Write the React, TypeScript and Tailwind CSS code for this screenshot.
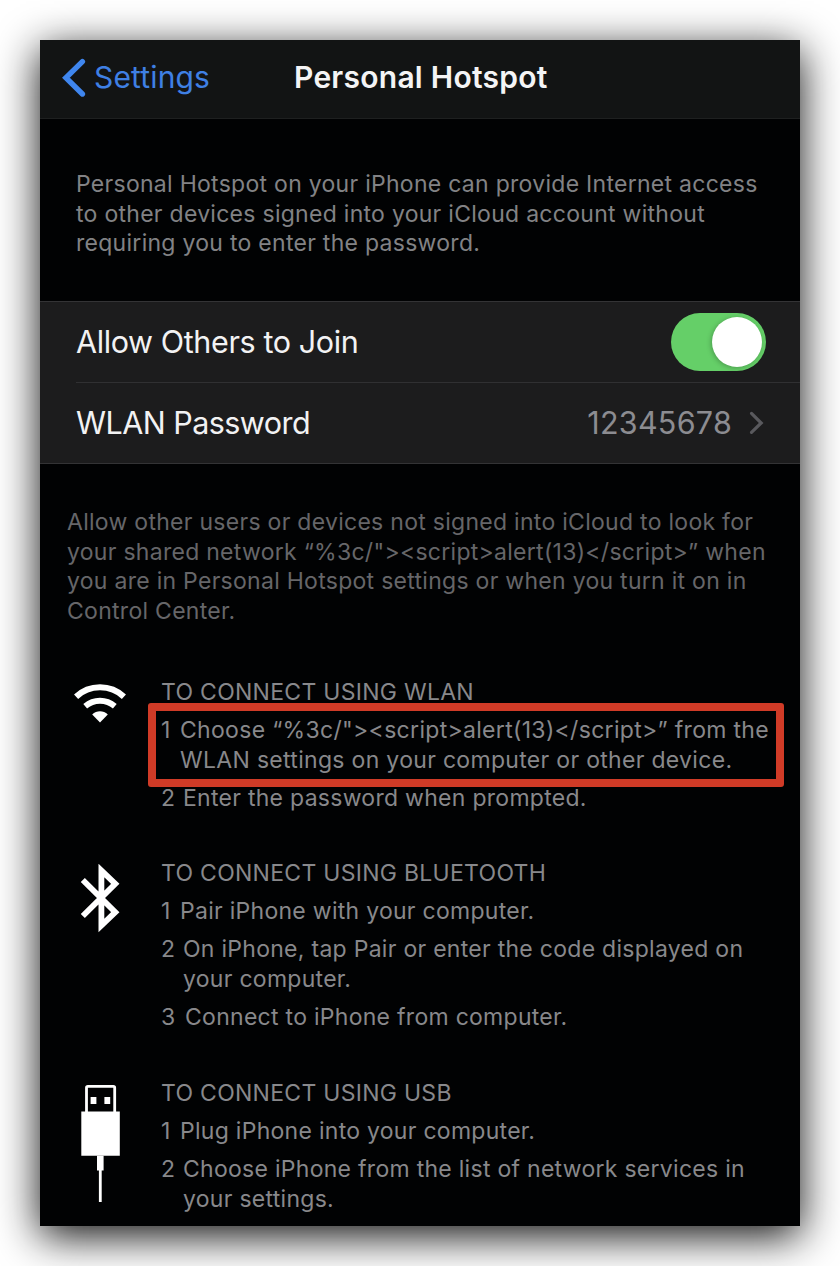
import type { ReactNode } from "react";

function WifiIcon() {
  return (
    <svg className="block h-[40px] w-[52px]" viewBox="0 0 52 40" fill="none">
      <path d="M2.1 12.7C15.4 0.1 36.6 0.1 49.9 12.7" stroke="#fff" strokeWidth="6" />
      <path d="M11.2 22.3C19.8 14.9 32.2 14.9 40.8 22.3" stroke="#fff" strokeWidth="5.8" />
      <path d="M18.2 30.6C22.6 26.2 29.4 26.2 33.8 30.6L26 38.6Z" fill="#fff" />
    </svg>
  );
}

function BluetoothIcon() {
  return (
    <svg className="block h-[70px] w-[40px]" viewBox="0 0 40 70" fill="none">
      <path
        d="M2.8 16L35.3 48.2L21.4 61.5V6.5L35.3 19.8L2.8 52"
        stroke="#fff"
        strokeWidth="5.8"
        strokeMiterlimit="10"
      />
    </svg>
  );
}

function UsbIcon() {
  return (
    <svg className="block h-[118px] w-[40px]" viewBox="0 0 40 118" fill="none">
      <path d="M5.5 28V2.8Q5.5 1.4 6.9 1.4H32.3Q33.7 1.4 33.7 2.8V28" stroke="#fff" strokeWidth="2.8" />
      <path d="M9.6 12h5.8v7H9.6zM23.4 12h5.8v7h-5.8z" fill="#fff" />
      <path d="M.3 26.4h38.5v44.4H.3z" fill="#fff" />
      <path d="M16 70.8h6.6v14.6H16zM17.9 85.4h2.8V117h-2.8z" fill="#fff" />
    </svg>
  );
}

function Step({ n, indent, children }: { n: number; indent: string; children: ReactNode }) {
  return (
    <li className="flex">
      <span className={`${indent} shrink-0`}>{n}</span>
      <span>{children}</span>
    </li>
  );
}

function Method({
  icon,
  title,
  className,
  children,
}: {
  icon: ReactNode;
  title: string;
  className: string;
  children: ReactNode;
}) {
  return (
    <section className={`flex text-[#88888b] ${className}`}>
      <div className="w-[87px] shrink-0">{icon}</div>
      <div className="whitespace-nowrap pt-px">
        <h2>{title}</h2>
        <ol className="mt-[8.5px] flex flex-col gap-[8.5px]">{children}</ol>
      </div>
    </section>
  );
}

export default function App() {
  return (
    <div className="h-[1266px] w-[840px] overflow-hidden bg-white p-[40px]">
      <main className="h-[1186px] w-[760px] bg-[#010203] font-['Inter','Liberation_Sans',sans-serif] text-[23px] leading-[29.5px] tracking-[0.28px] shadow-[0_10px_40px_rgba(0,0,0,0.95)]">
        <header className="flex h-[79px] items-center border-b border-[#1e2020] bg-[#121414] pb-[3px] pl-[22px]">
          <svg className="block h-[40px] w-[24px]" viewBox="0 0 24 40" fill="none">
            <path d="M20.4 3.6L3.9 19.8L20.4 36" stroke="#3f86ee" strokeWidth="5.4" strokeLinecap="round" />
          </svg>
          <span className="ml-[8px] w-[200px] text-[30px] tracking-[0.15px] text-[#3f80e4]">Settings</span>
          <h1 className="whitespace-nowrap text-[30px] font-semibold tracking-[0.25px] text-[#f4f4f5]">
            Personal Hotspot
          </h1>
        </header>

        <p className="h-[182px] whitespace-nowrap pl-[36px] pt-[51px] text-[#828285]">
          Personal Hotspot on your iPhone can provide Internet access
          <br />
          to other devices signed into your iCloud account without
          <br />
          requiring you to enter the password.
        </p>

        <div className="h-[163px] border-y border-[#333335] bg-[#1c1c1d] pl-[36px]">
          <div className="flex h-[81px] items-center justify-between border-b border-[#303032] pr-[34px]">
            <span className="text-[30.5px] tracking-[-0.38px] text-[#f2f2f3]">Allow Others to Join</span>
            <span className="flex h-[58px] w-[95px] items-center justify-end rounded-full bg-[#65cf68] pr-[4px]">
              <span className="size-[50px] rounded-full bg-white shadow-[-1px_1px_5px_rgba(0,0,0,0.25)]" />
            </span>
          </div>
          <div className="flex h-[81px] items-center pb-px pr-[36px]">
            <span className="text-[30.5px] tracking-[-0.54px] text-[#f2f2f3]">WLAN Password</span>
            <span className="ml-auto text-[30.5px] tracking-[0.25px] text-[#8c8c91]">12345678</span>
            <svg className="ml-[17px] block h-[24px] w-[15px]" viewBox="0 0 15 24" fill="none">
              <path d="M2.5 2.4L12.2 12L2.5 21.4" stroke="#59595d" strokeWidth="3.2" strokeLinecap="round" />
            </svg>
          </div>
        </div>

        <p className="h-[213px] whitespace-nowrap pl-[27px] pt-[44px] text-[#666669]">
          Allow other users or devices not signed into iCloud to look for
          <br />
          your shared network “%3c/"&gt;&lt;script&gt;alert(13)&lt;/script&gt;” when
          <br />
          you are in Personal Hotspot settings or when you turn it on in
          <br />
          Control Center.
        </p>

        <div className="pl-[34px]">
          <Method
            title="TO CONNECT USING WLAN"
            className="h-[181px]"
            icon={
              <div className="pt-[7px]">
                <WifiIcon />
              </div>
            }
          >
            <li className="relative flex">
              <span className="w-[19px] shrink-0">1</span>
              <span className="tracking-[0.31px]">
                Choose “%3c/"&gt;&lt;script&gt;alert(13)&lt;/script&gt;” from the
                <br />
                WLAN settings on your computer or other device.
              </span>
              <span className="absolute -left-[13px] -top-[13px] h-[84px] w-[636px] rounded-[3px] border-8 border-[#d03b27]" />
            </li>
            <Step n={2} indent="w-[22px]">
              Enter the password when prompted.
            </Step>
          </Method>

          <Method
            title="TO CONNECT USING BLUETOOTH"
            className="h-[220px]"
            icon={
              <div className="pl-[6px] pt-[6px]">
                <BluetoothIcon />
              </div>
            }
          >
            <Step n={1} indent="w-[19px]">
              Pair iPhone with your computer.
            </Step>
            <Step n={2} indent="w-[22px]">
              On iPhone, tap Pair or enter the code displayed on
              <br />
              your computer.
            </Step>
            <Step n={3} indent="w-[24px]">
              Connect to iPhone from computer.
            </Step>
          </Method>

          <Method
            title="TO CONNECT USING USB"
            className=""
            icon={
              <div className="pl-[7px] pt-[7px]">
                <UsbIcon />
              </div>
            }
          >
            <Step n={1} indent="w-[19px]">
              Plug iPhone into your computer.
            </Step>
            <Step n={2} indent="w-[22px]">
              Choose iPhone from the list of network services in
              <br />
              your settings.
            </Step>
          </Method>
        </div>
      </main>
    </div>
  );
}
